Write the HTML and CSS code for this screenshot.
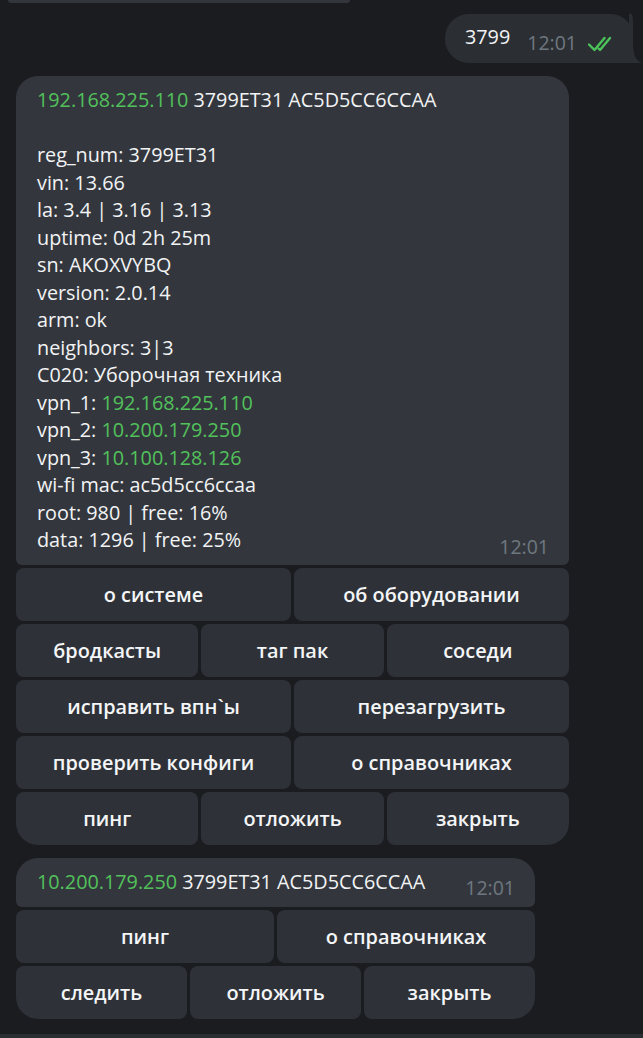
FILE: index.html
```html
<!DOCTYPE html>
<html lang="ru">
<head>
<meta charset="utf-8">
<title>Chat</title>
<link rel="stylesheet" href="styles.css">
</head>
<body>
<div class="chat">
  <div class="prev-edge"></div>

  <div class="out-row">
    <div class="out-bubble">
      <span class="out-text">3799</span>
      <span class="time">12:01</span>
      <svg class="checks" width="28" height="16" viewBox="0 0 28 16">
        <path d="M1 8.5 L6.5 14 L16.5 2" fill="none" stroke="#4cc25a" stroke-width="2.4" stroke-linecap="round" stroke-linejoin="round"/>
        <path d="M10.5 12.5 L12 14 L22 2" fill="none" stroke="#4cc25a" stroke-width="2.4" stroke-linecap="round" stroke-linejoin="round"/>
      </svg>
      <svg class="tail" width="14" height="50" viewBox="0 0 14 50">
        <path d="M0 0 L2 0 C4 0 4 6 4 12 L4 30 C4 42 8 48 14 49 L14 49 L0 49 Z" fill="#2b2f33"/>
      </svg>
    </div>
  </div>

  <div class="block block-main">
    <div class="bubble">
      <div class="line"><span class="green">192.168.225.110</span> 3799ET31 AC5D5CC6CCAA</div>
      <div class="line">&nbsp;</div>
      <div class="line">reg_num: 3799ET31</div>
      <div class="line">vin: 13.66</div>
      <div class="line">la: 3.4 | 3.16 | 3.13</div>
      <div class="line">uptime: 0d 2h 25m</div>
      <div class="line">sn: AKOXVYBQ</div>
      <div class="line">version: 2.0.14</div>
      <div class="line">arm: ok</div>
      <div class="line">neighbors: 3|3</div>
      <div class="line">C020: Уборочная техника</div>
      <div class="line">vpn_1: <span class="green">192.168.225.110</span></div>
      <div class="line">vpn_2: <span class="green">10.200.179.250</span></div>
      <div class="line">vpn_3: <span class="green">10.100.128.126</span></div>
      <div class="line">wi-fi mac: ac5d5cc6ccaa</div>
      <div class="line">root: 980 | free: 16%</div>
      <div class="foot">
        <div class="line">data: 1296 | free: 25%</div>
        <span class="time time-in">12:01</span>
      </div>
    </div>
    <div class="kb">
      <div class="kb-row"><div class="btn">о системе</div><div class="btn">об оборудовании</div></div>
      <div class="kb-row"><div class="btn">бродкасты</div><div class="btn">таг пак</div><div class="btn">соседи</div></div>
      <div class="kb-row"><div class="btn">исправить впн`ы</div><div class="btn">перезагрузить</div></div>
      <div class="kb-row"><div class="btn">проверить конфиги</div><div class="btn">о справочниках</div></div>
      <div class="kb-row last"><div class="btn">пинг</div><div class="btn">отложить</div><div class="btn">закрыть</div></div>
    </div>
  </div>

  <div class="block block-second">
    <div class="bubble bubble-single">
      <div class="line"><span class="green">10.200.179.250</span> 3799ET31 AC5D5CC6CCAA</div>
      <span class="time time-in">12:01</span>
    </div>
    <div class="kb">
      <div class="kb-row"><div class="btn">пинг</div><div class="btn">о справочниках</div></div>
      <div class="kb-row last"><div class="btn">следить</div><div class="btn">отложить</div><div class="btn">закрыть</div></div>
    </div>
  </div>
</div>
<div class="input-edge"></div>
</body>
</html>
```

FILE: styles.css
```css
html, body {
  margin: 0;
  padding: 0;
}
body {
  background: #1a1c20;
  font-family: "Open Sans", "Noto Sans", sans-serif;
  color: #f2f3f5;
  width: 643px;
  height: 1038px;
  overflow: hidden;
  display: flex;
  flex-direction: column;
}
.chat {
  flex: 1;
  display: flex;
  flex-direction: column;
}
.prev-edge {
  margin-left: 8px;
  width: 342px;
  height: 3px;
  background: #32363c;
  border-radius: 0 0 10px 10px;
}
.out-row {
  display: flex;
  justify-content: flex-end;
  margin-top: 11px;
}
.out-bubble {
  position: relative;
  width: 188px;
  height: 49px;
  margin-right: 10px;
  background: #2b2f33;
  border-radius: 24px 22px 0 24px;
  display: flex;
  align-items: center;
  box-sizing: border-box;
  padding-left: 20px;
}
.out-text {
  font-size: 19.8px;
  line-height: 27.5px;
  margin-top: -3px;
}
.out-bubble .time {
  margin-left: 17px;
  margin-top: 9px;
}
.checks {
  margin-left: 11px;
  margin-top: 11px;
}
.tail {
  position: absolute;
  right: -10px;
  top: 0;
}
.time {
  font-size: 19.5px;
  line-height: 20px;
  color: #6f7780;
}
.green {
  color: #52c15b;
}
.block {
  margin-left: 16px;
  display: flex;
  flex-direction: column;
}
.block-main {
  margin-top: 13px;
  width: 553px;
}
.block-second {
  margin-top: 13px;
  width: 519px;
}
.bubble {
  background: #33373d;
  border-radius: 22px 22px 6px 6px;
  padding: 10px 20px 11px 21px;
}
.line {
  font-size: 19.8px;
  line-height: 27.5px;
  white-space: nowrap;
}
.foot {
  display: flex;
  justify-content: space-between;
  align-items: flex-end;
}
.time-in {
  margin-bottom: -3px;
}
.bubble-single {
  display: flex;
  justify-content: space-between;
  align-items: flex-end;
  padding: 10px 20px 12px 21px;
}
.kb {
  display: flex;
  flex-direction: column;
  gap: 3px;
  margin-top: 3px;
}
.kb-row {
  display: flex;
  gap: 3px;
}
.btn {
  flex: 1 1 0;
  height: 53px;
  background: #2e3238;
  border-radius: 8px;
  display: flex;
  align-items: center;
  justify-content: center;
  font-size: 19.9px;
  font-weight: 600;
  color: #f4f5f7;
  white-space: nowrap;
}
.kb-row.last .btn:first-child {
  border-bottom-left-radius: 22px;
}
.kb-row.last .btn:last-child {
  border-bottom-right-radius: 22px;
}
.input-edge {
  height: 4px;
  background: #2a2d32;
}
```
